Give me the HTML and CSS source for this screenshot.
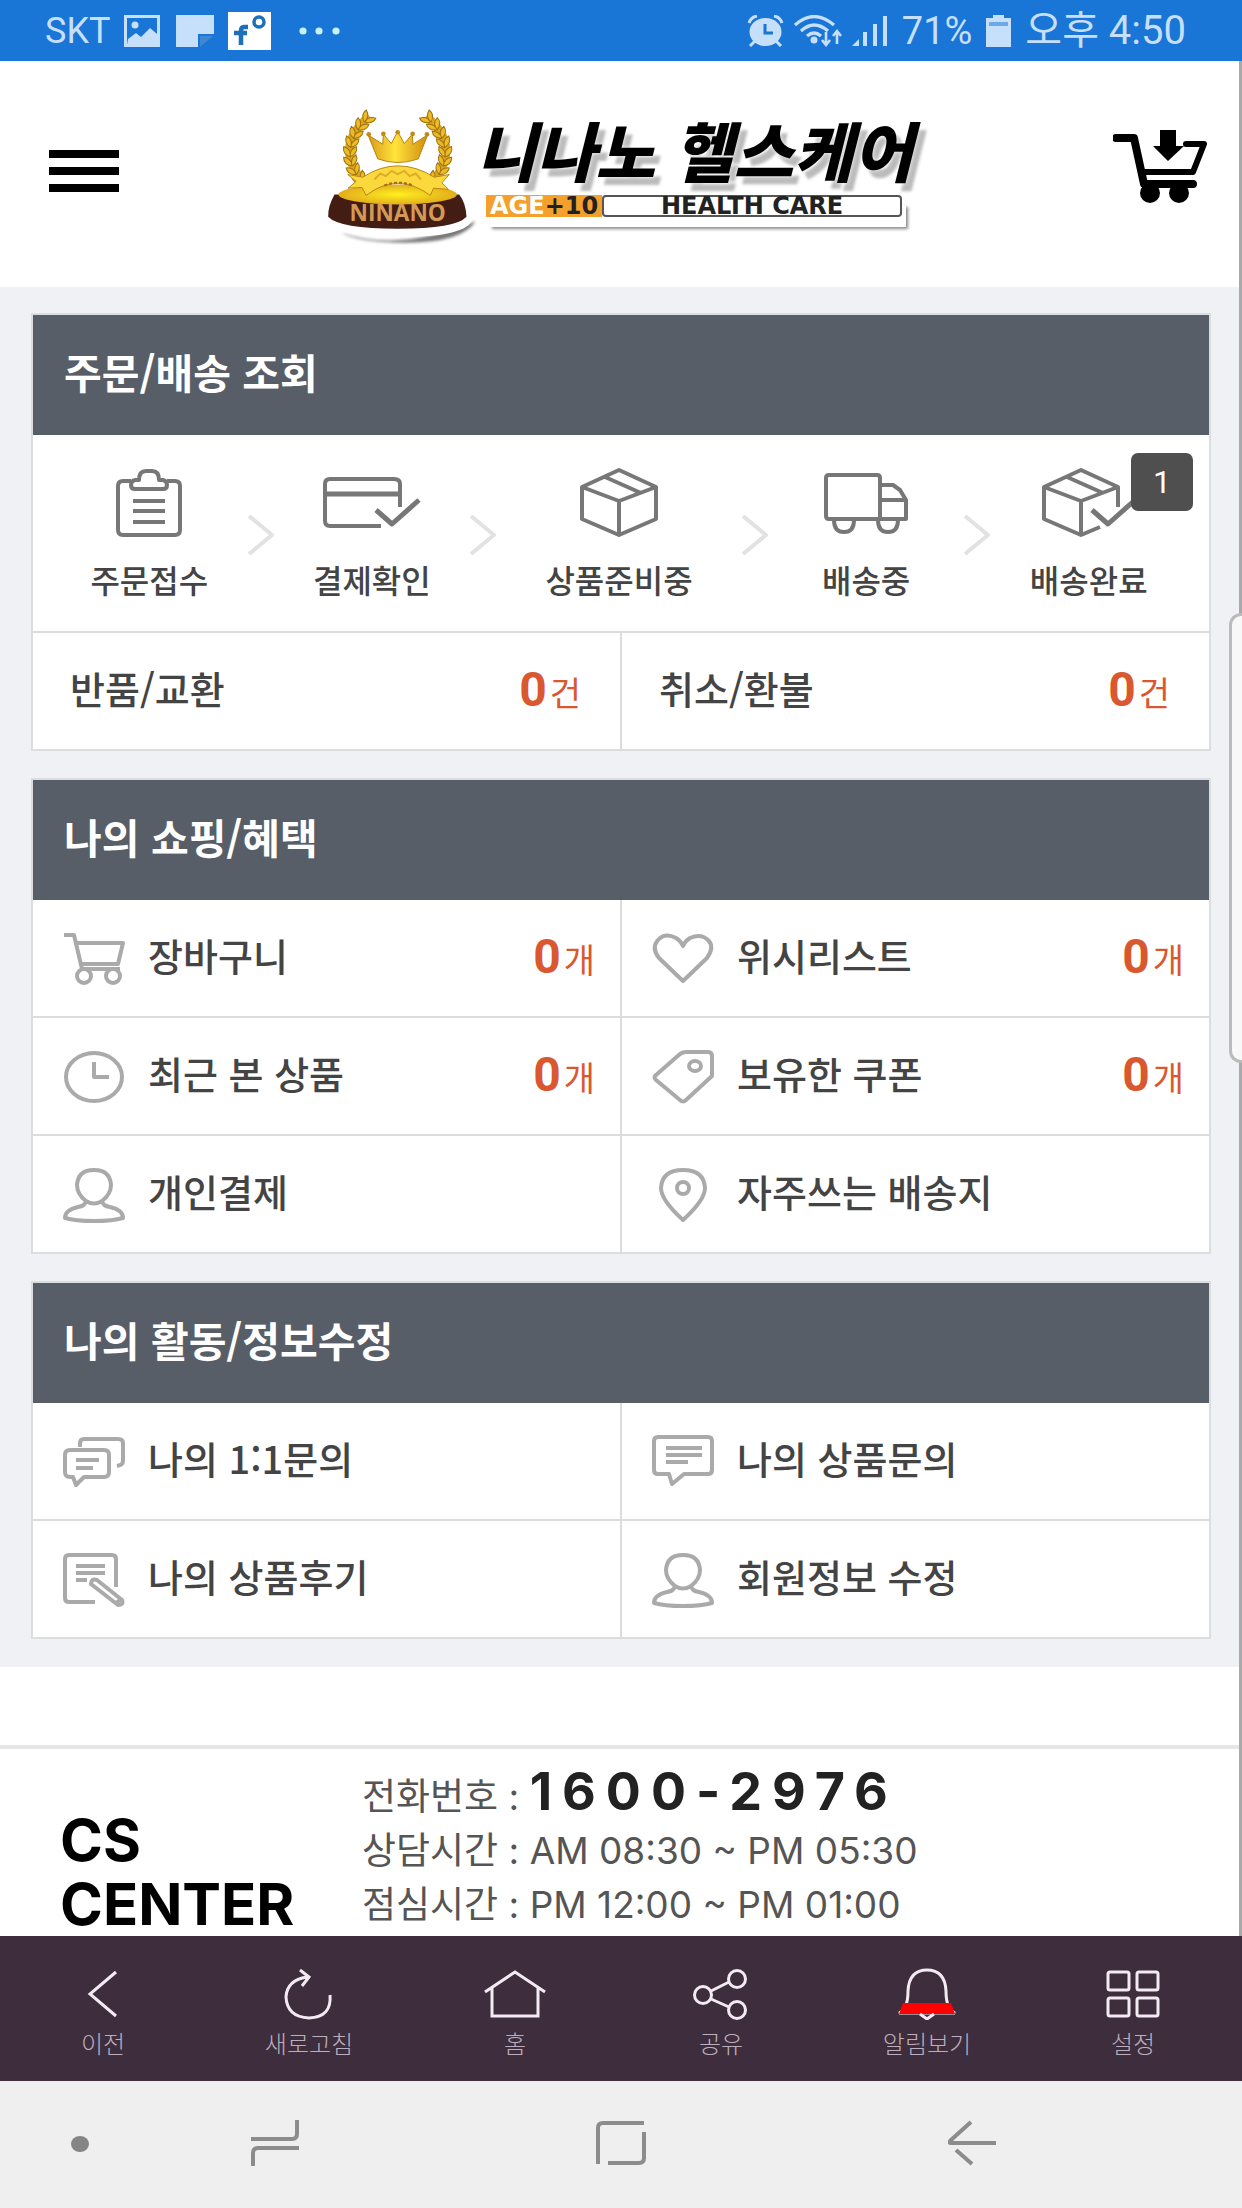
FILE: index.html
```html
<!DOCTYPE html>
<html lang="ko">
<head>
    <meta charset="UTF-8">
    <meta name="viewport" content="width=device-width, initial-scale=1.0">
    <title>니나노 헬스케어</title>
    <link rel="stylesheet" href="styles.css">
</head>
<body>
    <!-- Phone status bar -->
    <div class="statusbar">
        <div class="status-left">
            <span>SKT</span>
            <svg width="36" height="32" viewBox="0 0 36 32"><rect x="1.5" y="1.5" width="33" height="29" fill="none" stroke="#c6dffa" stroke-width="3"/><circle cx="11" cy="10" r="3.5" fill="#c6dffa"/><path d="M4 24l8-6 5 4 9-9 7 6v11H3z" fill="#c6dffa"/></svg>
            <svg class="note" width="38" height="32" viewBox="0 0 38 32"><path d="M0 0h38v19H22v13H0z" fill="#c6dffa"/><path d="M24 21h13L24 32z" fill="#3f87d2"/></svg>
            <svg width="43" height="38" viewBox="0 0 43 38"><rect width="43" height="38" fill="#fff"/><path d="M20 15h-4q-3 0-3 4v14M6 21h13" fill="none" stroke="#1c6fb8" stroke-width="4.5"/><circle cx="31" cy="10" r="5" fill="none" stroke="#1c6fb8" stroke-width="3.5"/></svg>
            <svg class="dots" width="42" height="8" viewBox="0 0 42 8"><g fill="#c6f0fa"><circle cx="4" cy="4" r="3.6"/><circle cx="20" cy="4" r="3.6"/><circle cx="37" cy="4" r="3.6"/></g></svg>
        </div>
        <div class="status-right">
            <svg width="37" height="32" viewBox="0 0 37 32"><g fill="none" stroke="#c6dffa" stroke-width="3"><path d="M2 8q2-6 8-7M35 8q-2-6-8-7M8 26l-5 5M29 26l5 5"/></g><ellipse cx="18.500" cy="17" rx="16" ry="14" fill="#c6dffa"/><path d="M18 9v9h8" fill="none" stroke="#1976d6" stroke-width="3"/></svg>
            <svg width="48" height="32" viewBox="0 0 48 32"><g fill="none" stroke="#c6dffa" stroke-width="3.200"><path d="M1 10Q20-7 40 10M7 16q13-12 27 0M13 21q7-6 14 0"/><path d="M32 17v12M28 25l4 5 4-5M43 29V18M39 21l4-5 4 5" stroke-width="2.600"/></g><circle cx="20" cy="25" r="3.500" fill="#c6dffa"/></svg>
            <svg width="36" height="30" viewBox="0 0 36 30"><g fill="#c6dffa"><path d="M0 30l7-7v7z"/><rect x="11" y="16" width="4" height="14"/><rect x="21" y="8" width="4" height="22"/><rect x="31" width="4" height="30"/></g></svg>
            <span>71%</span>
            <svg width="25" height="32" viewBox="0 0 25 32"><path d="M7 0h11v3h7v29H0V3h7z" fill="#c6dffa"/><path d="M3 9h19" stroke="#6ea8e8" stroke-width="4"/></svg>
            <span class="clock">오후 4:50</span>
        </div>
    </div>

    <div class="screen">
        <div class="page">
            <header class="topbar">
                <button type="button" class="menu-btn" aria-label="메뉴"><i></i><i></i><i></i></button>
                <a href="#" class="logo">
                    <svg width="150" height="143" viewBox="20 50 450 430">
                        <defs>
                            <radialGradient id="gold"><stop offset="0" stop-color="#fff01e"/><stop offset="1" stop-color="#e3ad1c"/></radialGradient>
                            <linearGradient id="crown" x2="1"><stop offset="0" stop-color="#d99a14"/><stop offset=".45" stop-color="#ffe43c"/><stop offset="1" stop-color="#d08c10"/></linearGradient>
                            <filter id="soft"><feGaussianBlur stdDeviation="5"/></filter>
                            <g id="leaf"><path d="M0 8Q-24-2-18-24Q4-16 0 8Q-2-14 20-22Q24-2 0 8z" fill="#ecbb26" stroke="#a0720f" stroke-width="3"/></g>
                            <g id="branch">
                                <path d="M150 90Q40 180 130 285" fill="none" stroke="#d9a41e" stroke-width="26"/>
                                <use href="#leaf" transform="translate(125 282) rotate(-35)"/>
                                <use href="#leaf" transform="translate(107 258) rotate(-28)"/>
                                <use href="#leaf" transform="translate(96 232) rotate(-15)"/>
                                <use href="#leaf" transform="translate(92 204) rotate(-3)"/>
                                <use href="#leaf" transform="translate(95 176) rotate(10)"/>
                                <use href="#leaf" transform="translate(105 149) rotate(20)"/>
                                <use href="#leaf" transform="translate(120 124) rotate(30)"/>
                                <use href="#leaf" transform="translate(140 101) rotate(38)"/>
                            </g>
                        </defs>
                        <path d="M65 440Q240 500 470 405Q430 470 260 470Q120 470 65 440z" fill="#777" filter="url(#soft)"/>
                        <path d="M20 400Q30 450 235 452T460 400z" fill="#fff"/>
                        <path d="M45 325Q25 360 26 392Q60 428 235 428T442 392Q440 350 420 325z" fill="#431c14"/>
                        <ellipse cx="235" cy="325" rx="178" ry="30" fill="url(#gold)"/>
                        <use href="#branch"/>
                        <use href="#branch" transform="matrix(-1 0 0 1 470 0)"/>
                        <path d="M85 265l45 8Q235 205 345 273l45-8-22 25 20 20-45-4-10 22Q235 255 140 328l-12-24-42 2 24-20z" fill="#fbd83c" stroke="#b98813" stroke-width="3"/>
                        <path d="M165 280l18-18 16 8 18-16 18 10 20-10 16 16 18-8 16 18" fill="none" stroke="#dcae26" stroke-width="6"/>
                        <path d="M195 298q42-16 85 0" fill="none" stroke="#a56c20" stroke-width="7" stroke-dasharray="9 6"/>
                        <path d="M175 218L146 146l44 28 2-30 24 28 19-36 20 36 24-28 2 30 44-28-28 72q-60 22-122 0z" fill="url(#crown)" stroke="#b8810f" stroke-width="3"/>
                        <g fill="#c18a18"><circle cx="148" cy="144" r="7"/><circle cx="192" cy="143" r="7"/><circle cx="235" cy="138" r="7"/><circle cx="280" cy="143" r="7"/><circle cx="323" cy="144" r="7"/></g>
                        <text x="235" y="405" text-anchor="middle" font-family="Open Sans, sans-serif" font-weight="700" font-size="68" fill="#d29a56">NINANO</text>
                    </svg>
                    <span class="logo-words">
                        <span class="logo-name">니나노 헬스케어</span>
                        <span class="logo-tag"><b class="age"><em>AGE</em>+10</b><b class="care">HEALTH CARE</b></span>
                    </span>
                </a>
                <a href="#" class="cart-btn" aria-label="장바구니">
                    <svg width="94" height="74" viewBox="0 0 94 74"><path d="M3 8h18l10 46h49" fill="none" stroke="#000" stroke-width="8" stroke-linecap="round" stroke-linejoin="round"/><path d="M73 14h18L80 42H30" fill="none" stroke="#000" stroke-width="6" stroke-linejoin="round" stroke-linecap="round"/><path d="M47 0h16v16h8L55 31 40 16h7z"/><circle cx="37" cy="63" r="10"/><circle cx="66" cy="63" r="10"/></svg>
                </a>
            </header>

            <main class="mypage">
                <!-- Order status -->
                <section class="panel">
                    <h2>주문/배송 조회</h2>
                    <div class="steps">
                        <a href="#" class="step">
                            <svg width="64" height="68" viewBox="0 0 64 68"><path d="M14 12H6q-5 0-5 5v44q0 5 5 5h52q5 0 5-5V17q0-5-5-5h-8M18 20h28q4 0 4-4t-4-5h-4q0-9-7-9h-6q-7 0-7 9h-4q-4 1-4 5t4 4zM16 32h32M16 42h32M16 53h32"/></svg>
                            <span>주문접수</span>
                        </a>
                        <svg class="arrow" width="26" height="40" viewBox="0 0 26 40"><path d="M1 1l23 19L1 39"/></svg>
                        <a href="#" class="step">
                            <svg width="96" height="68" viewBox="0 0 96 68"><path d="M57 57H6q-5 0-5-5V15q0-5 5-5h64q6 0 6 5v23"/><path d="M2 25h73M52 41l16 14 27-24" stroke-width="5"/></svg>
                            <span>결제확인</span>
                        </a>
                        <svg class="arrow" width="26" height="40" viewBox="0 0 26 40"><path d="M1 1l23 19L1 39"/></svg>
                        <a href="#" class="step">
                            <svg width="78" height="68" viewBox="0 0 78 68"><path d="M39 1l37 17v32L39 66 2 50V18zM2 18l37 14 37-14M39 32v34M25 8l36 16"/></svg>
                            <span>상품준비중</span>
                        </a>
                        <svg class="arrow" width="26" height="40" viewBox="0 0 26 40"><path d="M1 1l23 19L1 39"/></svg>
                        <a href="#" class="step">
                            <svg width="84" height="68" viewBox="0 0 84 68"><path d="M9 50H5q-3 0-3-3V9q0-3 3-3h48q3 0 3 3v41H9M56 16h13l7 5 6 10v19H56M57 31h24M10 51q0 12 10 12t10-12M54 51q0 12 10 12t10-12"/></svg>
                            <span>배송중</span>
                        </a>
                        <svg class="arrow" width="26" height="40" viewBox="0 0 26 40"><path d="M1 1l23 19L1 39"/></svg>
                        <a href="#" class="step">
                            <svg width="94" height="68" viewBox="0 0 94 68"><path d="M76 38V18L39 1 2 18v32l37 16 19-8M2 18l37 14 37-14M39 32v34M25 8l36 16"/><path d="M50 41l16 14 27-24" stroke-width="5"/></svg>
                            <span>배송완료</span>
                            <b class="badge">1</b>
                        </a>
                    </div>
                    <div class="cells plain">
                        <a href="#" class="cell">반품/교환 <span class="count"><b>0</b>건</span></a>
                        <a href="#" class="cell">취소/환불 <span class="count"><b>0</b>건</span></a>
                    </div>
                </section>

                <!-- Shopping / benefits -->
                <section class="panel">
                    <h2>나의 쇼핑/혜택</h2>
                    <div class="cells">
                        <a href="#" class="cell">
                            <svg width="60" height="54" viewBox="0 0 60 54"><path d="M0 3h10l8 34h38M13 11h46l-5 21H17"/><circle cx="20" cy="44" r="7"/><circle cx="49" cy="44" r="7"/></svg>
                            장바구니 <span class="count"><b>0</b>개</span>
                        </a>
                        <a href="#" class="cell">
                            <svg width="60" height="54" viewBox="0 0 60 54"><path d="M30 49L6 26Q-2 16 5 8t18-2q5 3 7 8 2-5 7-8 11-5 18 2t-1 18z"/></svg>
                            위시리스트 <span class="count"><b>0</b>개</span>
                        </a>
                        <a href="#" class="cell">
                            <svg width="60" height="54" viewBox="0 0 60 54"><ellipse cx="30" cy="27" rx="28" ry="24"/><path d="M30 12v15h15"/></svg>
                            최근 본 상품 <span class="count"><b>0</b>개</span>
                        </a>
                        <a href="#" class="cell">
                            <svg width="60" height="54" viewBox="0 0 60 54"><path d="M33 2h22q4 0 4 4v20L33 50q-3 3-6 0L3 30q-3-3 0-5L27 4q3-2 6-2z"/><ellipse cx="42" cy="16" rx="6" ry="5"/></svg>
                            보유한 쿠폰 <span class="count"><b>0</b>개</span>
                        </a>
                        <a href="#" class="cell">
                            <svg width="60" height="54" viewBox="0 0 60 54"><path d="M22 33Q13 26 13 17 14 2 30 2t17 15q0 9-9 16M22 33q-1 5-8 6Q1 42 1 50q10 3 29 3t29-3q0-8-13-11-7-1-8-6-8 5-16 0z"/></svg>
                            개인결제
                        </a>
                        <a href="#" class="cell">
                            <svg width="60" height="54" viewBox="0 0 60 54"><path d="M30 52Q8 32 8 20 9 2 30 2t22 18q0 12-22 32z"/><ellipse cx="30" cy="20" rx="6" ry="6"/></svg>
                            자주쓰는 배송지
                        </a>
                    </div>
                </section>

                <!-- Activity / profile -->
                <section class="panel">
                    <h2>나의 활동/정보수정</h2>
                    <div class="cells">
                        <a href="#" class="cell">
                            <svg width="60" height="54" viewBox="0 0 60 54"><path d="M16 12V8q0-4 4-4h34q5 0 5 4v18q0 4-6 5M6 15h34q5 0 5 5v17q0 5-5 5H20l-8 8-3-8H6q-5 0-5-5V20q0-5 5-5zM12 25h23M12 33h17"/></svg>
                            나의 1:1문의
                        </a>
                        <a href="#" class="cell">
                            <svg width="60" height="54" viewBox="0 0 60 54"><path d="M5 2h50q4 0 4 4v29q0 4-4 4H31L19 49l-3-10H5q-4 0-4-4V6q0-4 4-4zM13 13h36M13 20h36M13 27h22"/></svg>
                            나의 상품문의
                        </a>
                        <a href="#" class="cell">
                            <svg width="60" height="54" viewBox="0 0 60 54"><path d="M31 49H5q-4 0-4-4V6q0-4 4-4h43q4 0 4 4v28M12 13h29M12 20h29M12 27h11M27 31q0-6 6-4l25 20q2 5-4 5L27 31zM51 51l6-5"/></svg>
                            나의 상품후기
                        </a>
                        <a href="#" class="cell">
                            <svg width="60" height="54" viewBox="0 0 60 54"><path d="M22 33Q13 26 13 17 14 2 30 2t17 15q0 9-9 16M22 33q-1 5-8 6Q1 42 1 50q10 3 29 3t29-3q0-8-13-11-7-1-8-6-8 5-16 0z"/></svg>
                            회원정보 수정
                        </a>
                    </div>
                </section>
            </main>

            <footer class="cs">
                <h3>CS<br>CENTER</h3>
                <div class="cs-info">
                    <p>전화번호 : <strong>1600-2976</strong></p>
                    <p>상담시간 : AM 08:30 ~ PM 05:30</p>
                    <p>점심시간 : PM 12:00 ~ PM 01:00</p>
                </div>
            </footer>
        </div>
        <div class="edge-handle"></div>
    </div>

    <!-- App menu -->
    <nav class="appbar">
        <a href="#"><svg width="56" height="52" viewBox="0 0 56 52"><path d="M41 4L15 26l26 22"/></svg>이전</a>
        <a href="#"><svg width="56" height="52" viewBox="0 0 56 52"><path d="M49 27q2 22-21 23Q6 49 5 29 6 12 26 9M19 2l9 7-7 9"/></svg>새로고침</a>
        <a href="#"><svg width="64" height="52" viewBox="0 0 64 52"><path d="M2 24L32 4l30 20M9 20v28h46V20"/></svg>홈</a>
        <a href="#"><svg width="56" height="52" viewBox="0 0 56 52"><circle cx="10" cy="27" r="8.500"/><circle cx="44" cy="11" r="8.500"/><circle cx="44" cy="42" r="8.500"/><path d="M18 23l18-9M18 31l18 8"/></svg>공유</a>
        <a href="#"><svg width="60" height="52" viewBox="0 0 60 52"><path d="M2 45q9-4 9-22Q12 2 30 2t19 21q0 18 9 22z"/><path d="M6 35h48l4 11H2z" fill="red" stroke="none"/><path d="M23 46l7 5 7-5"/></svg>알림보기</a>
        <a href="#"><svg width="56" height="52" viewBox="0 0 56 52"><rect x="3" y="4" width="21" height="18" rx="2"/><rect x="32" y="4" width="21" height="18" rx="2"/><rect x="3" y="30" width="21" height="18" rx="2"/><rect x="32" y="30" width="21" height="18" rx="2"/></svg>설정</a>
    </nav>

    <!-- Phone navigation keys -->
    <div class="softkeys">
        <button type="button" aria-label="숨기기"><svg width="20" height="46" viewBox="0 0 20 46"><ellipse cx="10" cy="24" rx="9" ry="8" fill="#858585" stroke="none"/></svg></button>
        <button type="button" aria-label="최근 앱"><svg width="48" height="46" viewBox="0 0 48 46"><path d="M46 0v14q0 5-5 5H0M48 28H7q-5 0-5 5v13"/></svg></button>
        <button type="button" aria-label="홈"><svg width="50" height="46" viewBox="0 0 50 46"><path d="M48 3H7Q2 3 2 8v36M12 43h31q5 0 5-5V12"/></svg></button>
        <button type="button" aria-label="뒤로"><svg width="48" height="46" viewBox="0 0 48 46"><path d="M48 23H3q-3 0 0-3L23 2M8 30l16 14"/></svg></button>
    </div>
</body>
</html>
```

FILE: styles.css
```css
* {
    box-sizing: border-box;
}
body {
    margin: 0;
    min-height: 100vh;
    display: flex;
    flex-direction: column;
    font-family: "Noto Sans CJK KR", sans-serif;
    color: #444;
    background-color: #fff;
}
a {
    color: inherit;
    text-decoration: none;
}
button {
    padding: 0;
    border: none;
    background: none;
    cursor: pointer;
}
h2, h3, p {
    margin: 0;
}

/* status bar */
.statusbar {
    height: 61px;
    padding: 0 56px 0 45px;
    display: flex;
    align-items: center;
    justify-content: space-between;
    background-color: #1976d6;
    color: #c6dffa;
    font: 36px/60px Roboto, "Noto Sans CJK KR", sans-serif;
}
.status-left {
    display: flex;
    align-items: center;
    gap: 14px;
}
.status-left .note {
    margin-left: 2px;
}
.status-left .dots {
    margin-left: 14px;
}
.status-right {
    display: flex;
    align-items: center;
    gap: 14px;
    font-size: 38px;
}
.status-right svg + svg {
    margin-left: -4px;
}
.clock {
    font-size: 40px;
}

.screen {
    position: relative;
    flex: 1;
    border-right: 3px solid #a9a9a9;
}
/* pull-out handle lying on the right edge */
.edge-handle {
    position: absolute;
    top: 552px;
    right: -3px;
    width: 13px;
    height: 450px;
    background-color: #f8f8f8;
    border: 3px solid #bbb;
    border-right: none;
    border-radius: 12px 0 0 12px;
}

/* header */
.topbar {
    height: 226px;
    padding: 0 32px 0 49px;
    display: flex;
    align-items: center;
    justify-content: space-between;
}
.menu-btn {
    width: 70px;
    display: flex;
    flex-direction: column;
    gap: 9px;
    padding-bottom: 6px;
}
.menu-btn i {
    height: 8px;
    background-color: #000;
}
.cart-btn svg {
    display: block;
}
.cart-btn {
    padding-bottom: 14px;
}
.logo {
    display: flex;
    align-items: flex-start;
}
.logo-words {
    width: 430px;
}
.logo-name {
    display: block;
    color: #000;
    font-size: 65px;
    font-weight: 900;
    font-style: italic;
    line-height: 92px;
    white-space: nowrap;
    text-shadow: 0 0 4px #fff, 6px 8px 3px #bbb;
}
.logo-tag {
    display: flex;
    width: 416px;
    margin-left: 10px;
    height: 22px;
    font: bold 24px/22px "DejaVu Sans", sans-serif;
    color: #222;
    box-shadow: 4px 10px 0 #fff, 6px 12px 3px #888;
}
.age {
    padding: 0 4px;
    background-color: #f4a02c;
}
.age em {
    font-style: normal;
    color: #fff;
}
.care {
    flex: 1;
    line-height: 18px;
    text-align: center;
    border: 2px solid #555;
    border-radius: 4px;
    background-color: #fff;
}

/* panels */
.mypage {
    display: flex;
    flex-direction: column;
    gap: 27px;
    padding: 26px 28px 28px 31px;
    background-color: #f0f1f5;
}
.panel {
    border: 2px solid #dcdde0;
    background-color: #fff;
}
.panel h2 {
    padding: 0 31px 8px;
    background-color: #585e68;
    color: #fff;
    font-size: 41px;
    font-weight: 700;
    line-height: 112px;
}
.steps {
    display: grid;
    grid-template-columns: 4fr 26px 4fr 26px 5fr 26px 4fr 26px 4fr;
    padding: 34px 22px 30px 18px;
    align-items: center;
}
.step {
    position: relative;
    display: flex;
    flex-direction: column;
    align-items: center;
    gap: 20px;
    font-size: 32px;
    font-weight: 500;
    line-height: 44px;
    white-space: nowrap;
}
.step svg, .arrow {
    fill: none;
    stroke: #777;
    stroke-width: 4;
    stroke-linejoin: round;
}
.step svg, .cell svg {
    overflow: visible;
}
.arrow {
    stroke: #e2e2e2;
}
.badge {
    position: absolute;
    top: -16px;
    right: -6px;
    width: 62px;
    border-radius: 7px;
    background-color: #4f4f4f;
    color: #fff;
    font: 32px/58px Roboto, sans-serif;
    text-align: center;
}
.cells {
    display: grid;
    grid-template-columns: 1fr 1fr;
    gap: 2px;
    background-color: #dcdcdc;
}
.plain {
    border-top: 2px solid #dcdcdc;
}
.cell {
    display: flex;
    align-items: center;
    gap: 24px;
    height: 116px;
    padding: 0 25px 8px 31px;
    background-color: #fff;
    font-size: 38px;
    font-weight: 500;
}
.plain .cell {
    padding: 0 39px 8px 37px;
}
.cell svg {
    margin-top: 10px;
    fill: none;
    stroke: #aaa;
    stroke-width: 4;
    stroke-linejoin: round;
}
.count {
    margin-left: auto;
    padding-top: 4px;
    color: #d9582f;
    font-size: 34px;
    font-weight: 400;
}
.count b {
    margin-right: 3px;
    font: bold 48px Roboto, sans-serif;
}

/* customer center */
.cs {
    display: grid;
    grid-template-columns: 302px 1fr;
    height: 191px;
    margin-top: 78px;
    padding-left: 60px;
    border-top: 4px solid #e6e6e6;
}
.cs h3 {
    padding-top: 59px;
    color: #000;
    font: bold 58px/64px Inter, sans-serif;
}
.cs-info {
    padding-top: 16px;
    color: #555;
    font-family: Inter, "Noto Sans CJK KR", sans-serif;
    font-size: 37px;
    line-height: 54px;
}
.cs-info strong {
    color: #222;
    font-size: 52px;
    letter-spacing: 10px;
}

/* bottom app menu */
.appbar {
    display: flex;
    height: 145px;
    padding: 32px 6px 0 0;
    background-color: #3d2d3d;
}
.appbar a {
    flex: 1;
    display: flex;
    flex-direction: column;
    align-items: center;
    gap: 6px;
    color: #bcaebc;
    font-size: 24px;
    font-weight: 300;
    line-height: 34px;
}
.appbar svg {
    fill: none;
    stroke: #f3eaf3;
    stroke-width: 3;
}
.softkeys {
    display: grid;
    grid-template-columns: 16fr 23fr 46fr 24fr 15fr;
    height: 127px;
    background-color: #efefef;
}
.softkeys svg {
    fill: none;
    stroke: #8c8c8c;
    stroke-width: 4;
}
```
